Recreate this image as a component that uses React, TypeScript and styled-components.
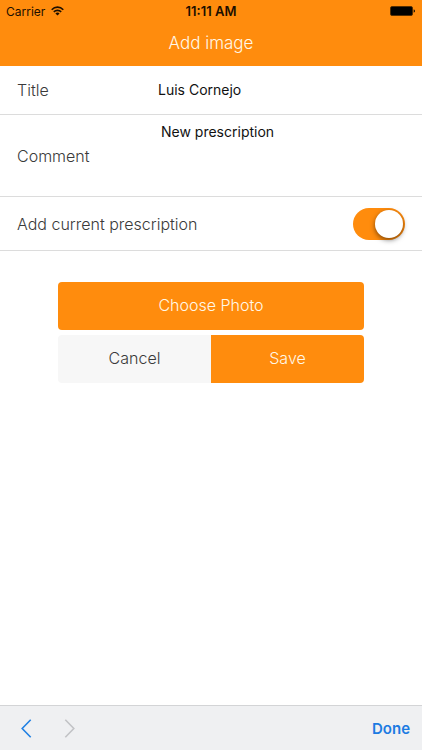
import React, { useState } from "react";
import styled, { createGlobalStyle } from "styled-components";

const orange = "#ff8c0d";

const GlobalStyle = createGlobalStyle`
  * {
    box-sizing: border-box;
  }
  body {
    margin: 0;
    background: #fff;
    color: #3a3a3a;
    font-family: Inter, "Liberation Sans", sans-serif;
    font-size: 16px;
    font-weight: 300;
  }
  button, input, textarea {
    font: inherit;
  }
`;

const Screen = styled.div`
  display: flex;
  flex-direction: column;
  min-height: 100vh;
`;

const Header = styled.header`
  background: ${orange};
`;

const StatusBar = styled.div`
  display: grid;
  grid-template-columns: 1fr auto 1fr;
  align-items: center;
  height: 22px;
  padding: 0 6px;
  color: #1c0f00;
  font-size: 12px;
  font-weight: 400;
`;

const Carrier = styled.div`
  display: flex;
  align-items: center;
  gap: 6px;
`;

const Clock = styled.div`
  font-size: 13px;
  font-weight: 600;
`;

const Battery = styled.svg`
  justify-self: end;
`;

const PageTitle = styled.h1`
  margin: 0;
  height: 44px;
  color: #fff8e8;
  font-size: 17px;
  font-weight: 300;
  line-height: 42px;
  text-align: center;
`;

const Main = styled.main`
  flex: 1;
`;

const Row = styled.div<{ $height: number }>`
  display: flex;
  align-items: center;
  min-height: ${(p) => p.$height}px;
  padding: 0 17px;
  border-bottom: 1px solid #dcdcdc;
`;

const Label = styled.label<{ $wide?: boolean }>`
  flex: ${(p) => (p.$wide ? "1" : "0 0 141px")};
  line-height: 20px;
`;

const TextInput = styled.input`
  flex: 1;
  min-width: 0;
  height: 32px;
  padding: 0 0 2px;
  border: 0;
  outline: 0;
  background: none;
  color: #111;
  font-size: 14px;
  font-weight: 400;
`;

const CommentBox = styled.textarea`
  flex: 1;
  align-self: stretch;
  min-width: 0;
  padding: 8px 3px;
  border: 0;
  outline: 0;
  background: none;
  color: #111;
  caret-color: #d5d9f2;
  font-size: 14px;
  font-weight: 400;
  line-height: 18px;
  resize: none;
`;

const Toggle = styled.input`
  appearance: none;
  display: flex;
  width: 52px;
  height: 32px;
  margin: 0;
  padding: 2px;
  border-radius: 16px;
  background: #ddd;

  &::before {
    content: "";
    width: 28px;
    height: 28px;
    border-radius: 50%;
    background: #fff;
    box-shadow: 0 2px 5px rgba(0, 0, 0, 0.5);
  }
  &:checked {
    justify-content: flex-end;
    background: ${orange};
  }
`;

const Actions = styled.div`
  display: grid;
  grid-template-columns: 1fr 1fr;
  row-gap: 5px;
  padding: 31px 58px;
`;

const ActionButton = styled.button<{ $kind: "full" | "left" | "right" }>`
  grid-column: ${(p) => (p.$kind === "full" ? "1 / -1" : "auto")};
  height: 48px;
  padding: 0 0 2px;
  border: 0;
  border-radius: ${(p) =>
    p.$kind === "full" ? "4px" : p.$kind === "left" ? "4px 0 0 4px" : "0 4px 4px 0"};
  background: ${(p) => (p.$kind === "left" ? "#f7f7f7" : orange)};
  color: ${(p) => (p.$kind === "left" ? "#3a3a3a" : "#fff8e8")};
`;

const KeyboardBar = styled.footer`
  display: flex;
  align-items: center;
  height: 45px;
  padding: 0 12px 0 16px;
  border-top: 1px solid #d3d4d6;
  background: #eff0f2;
`;

const BarButton = styled.button`
  display: flex;
  align-items: center;
  justify-content: center;
  width: 20px;
  height: 32px;
  margin-right: 23px;
  padding: 0;
  border: 0;
  background: none;
  color: #2180e3;

  &:disabled {
    color: #c2c3c6;
  }
`;

const DoneButton = styled.button`
  margin-left: auto;
  padding: 0;
  border: 0;
  background: none;
  color: #1c7be2;
  font-size: 15px;
  font-weight: 600;
`;

export default function App() {
  const [title, setTitle] = useState("Luis Cornejo");
  const [comment, setComment] = useState("New prescription");
  const [current, setCurrent] = useState(true);

  return (
    <Screen>
      <GlobalStyle />
      <Header>
        <StatusBar>
          <Carrier>
            Carrier
            <svg width="13" height="10" viewBox="0 0 13 10" fill="none" stroke="currentColor" strokeWidth="1.6" aria-hidden="true">
              <path d="M0.7 3.7C4 0.3 9 0.3 12.3 3.7" />
              <path d="M2.8 5.9C4.9 3.8 8.1 3.8 10.2 5.9" />
              <path d="M4.4 7.4C5.6 6.2 7.4 6.2 8.6 7.4L6.5 9.6Z" fill="currentColor" stroke="none" />
            </svg>
          </Carrier>
          <Clock>11:11 AM</Clock>
          <Battery width="26" height="10" viewBox="0 0 26 10" aria-hidden="true">
            <rect x="0.5" y="0.5" width="22" height="9" rx="1.5" fill="#000" stroke="#4a2800" strokeWidth="0.8" />
            <path d="M23.7 3.3C25.4 3.8 25.4 6.2 23.7 6.7Z" fill="#000" />
          </Battery>
        </StatusBar>
        <PageTitle>Add image</PageTitle>
      </Header>
      <Main>
        <Row $height={49}>
          <Label htmlFor="title">Title</Label>
          <TextInput id="title" value={title} onChange={(e) => setTitle(e.target.value)} />
        </Row>
        <Row $height={82}>
          <Label htmlFor="comment">Comment</Label>
          <CommentBox
            id="comment"
            autoFocus
            spellCheck={false}
            value={comment}
            onFocus={(e) => e.target.setSelectionRange(e.target.value.length, e.target.value.length)}
            onChange={(e) => setComment(e.target.value)}
          />
        </Row>
        <Row $height={54}>
          <Label htmlFor="current" $wide>Add current prescription</Label>
          <Toggle id="current" type="checkbox" checked={current} onChange={(e) => setCurrent(e.target.checked)} />
        </Row>
        <Actions>
          <ActionButton type="button" $kind="full">Choose Photo</ActionButton>
          <ActionButton type="button" $kind="left">Cancel</ActionButton>
          <ActionButton type="button" $kind="right">Save</ActionButton>
        </Actions>
      </Main>
      <KeyboardBar>
        <BarButton type="button" aria-label="Previous field">
          <svg width="11" height="19" viewBox="0 0 11 19" fill="none" stroke="currentColor" strokeWidth="1.6">
            <path d="M9.7 0.8L1.2 9.5L9.7 18.2" />
          </svg>
        </BarButton>
        <BarButton type="button" aria-label="Next field" disabled>
          <svg width="11" height="19" viewBox="0 0 11 19" fill="none" stroke="currentColor" strokeWidth="1.6">
            <path d="M1.3 0.8L9.8 9.5L1.3 18.2" />
          </svg>
        </BarButton>
        <DoneButton type="button">Done</DoneButton>
      </KeyboardBar>
    </Screen>
  );
}
